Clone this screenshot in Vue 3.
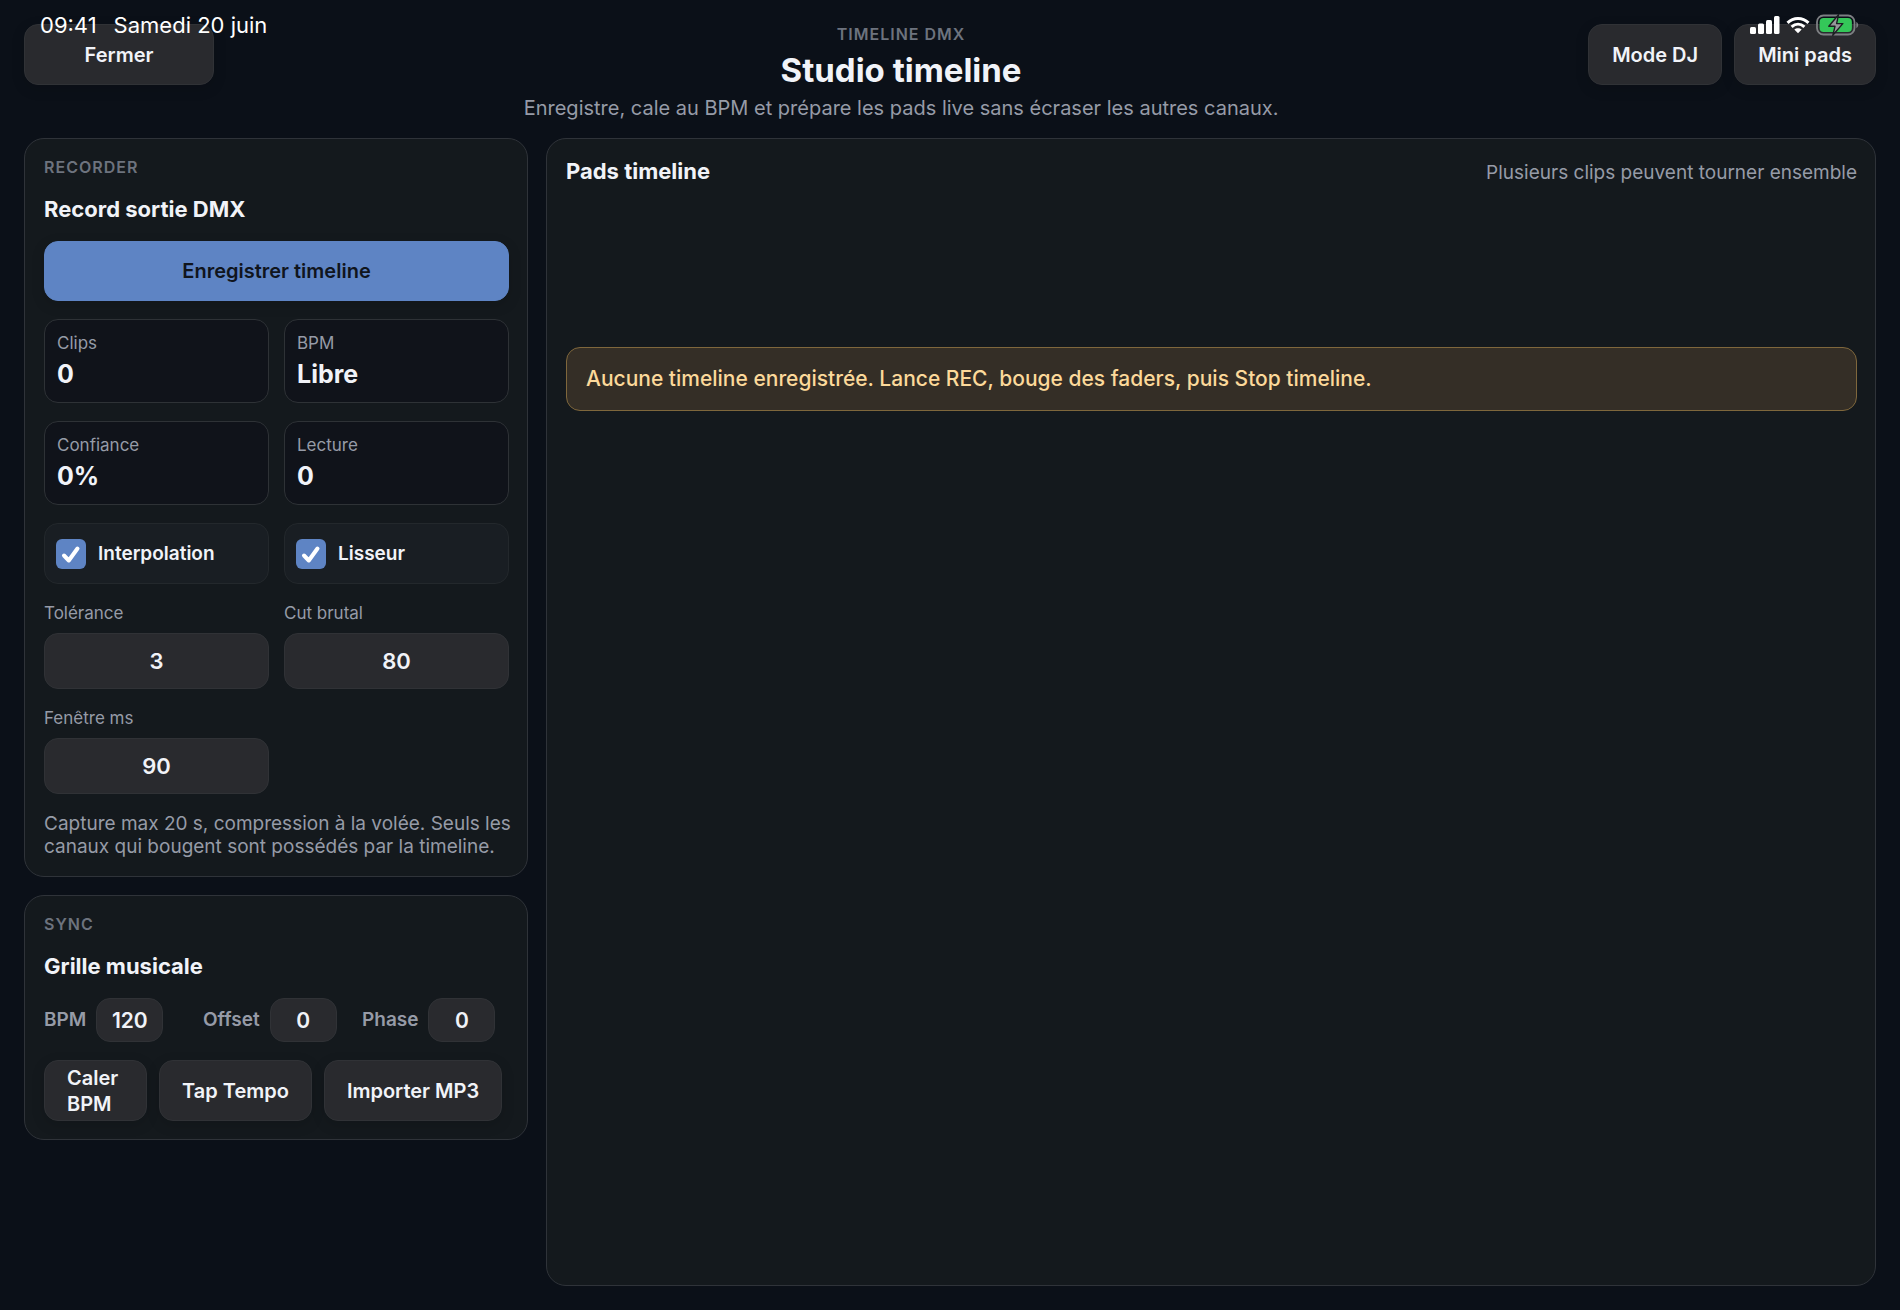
<script setup>
import { reactive } from 'vue'

const stats = [
  { label: 'Clips', value: '0' },
  { label: 'BPM', value: 'Libre' },
  { label: 'Confiance', value: '0%' },
  { label: 'Lecture', value: '0' },
]

const toggles = reactive([
  { id: 'interpolation', label: 'Interpolation', on: true },
  { id: 'lisseur', label: 'Lisseur', on: true },
])

const settings = reactive([
  { id: 'tolerance', label: 'Tolérance', value: '3' },
  { id: 'cut', label: 'Cut brutal', value: '80' },
  { id: 'fenetre', label: 'Fenêtre ms', value: '90' },
])

const sync = reactive([
  { id: 'bpm', label: 'BPM', value: '120' },
  { id: 'offset', label: 'Offset', value: '0' },
  { id: 'phase', label: 'Phase', value: '0' },
])
</script>

<template>
  <div class="page">
    <div class="status">
      <div class="status-side">
        <span>09:41</span>
        <span>Samedi 20 juin</span>
      </div>
      <div class="status-icons">
        <svg width="30" height="18" viewBox="0 0 30 18" fill="#fff" aria-hidden="true">
          <rect x="0" y="11" width="6" height="7" rx="1.5" />
          <rect x="8" y="7.5" width="6" height="10.5" rx="1.5" />
          <rect x="16" y="4" width="6" height="14" rx="1.5" />
          <rect x="24" y="0" width="5.5" height="18" rx="1.5" />
        </svg>
        <svg width="24" height="18" viewBox="0 0 24 18" fill="none" stroke="#fff" stroke-width="3" aria-hidden="true">
          <path d="M1.5 6.8C7.5 1 16.5 1 22.5 6.8" />
          <path d="M5.6 10.9C9.4 7.5 14.6 7.5 18.4 10.9" />
          <path d="M12 17.2L8.3 13.5C10.4 11.7 13.6 11.7 15.7 13.5Z" fill="#fff" stroke="none" />
        </svg>
        <svg width="44" height="22" viewBox="0 0 44 22" aria-hidden="true">
          <rect x="1" y="1.5" width="37.5" height="19" rx="6.5" fill="none" stroke="#7d7f83" stroke-width="1.8" />
          <path d="M40.3 8V14C42.8 13.2 42.8 8.8 40.3 8Z" fill="#7d7f83" />
          <rect x="3.6" y="4" width="32.3" height="14" rx="4" fill="#34c759" />
          <path d="M22.5 0.8L12.8 12.3H19L16.8 21.3L26.8 9.6H20.6Z" fill="#96989b" stroke="#1b2021" stroke-width="1.4" stroke-linejoin="round" />
        </svg>
      </div>
    </div>

    <header class="header">
      <button type="button" class="btn close">Fermer</button>
      <div class="heading">
        <p class="eyebrow">TIMELINE DMX</p>
        <h1>Studio timeline</h1>
        <p class="subtitle">Enregistre, cale au BPM et prépare les pads live sans écraser les autres canaux.</p>
      </div>
      <div class="actions">
        <button type="button" class="btn">Mode DJ</button>
        <button type="button" class="btn">Mini pads</button>
      </div>
    </header>

    <div class="layout">
      <aside class="side">
        <section class="panel">
          <p class="eyebrow">RECORDER</p>
          <h2>Record sortie DMX</h2>
          <button type="button" class="btn primary">Enregistrer timeline</button>
          <div class="grid">
            <div v-for="s in stats" :key="s.label" class="stat">
              <span>{{ s.label }}</span>
              <strong>{{ s.value }}</strong>
            </div>
            <label v-for="t in toggles" :key="t.id" class="toggle" :for="t.id">
              <span class="tick">
                <input :id="t.id" v-model="t.on" type="checkbox" />
                <svg v-if="t.on" width="30" height="30" viewBox="0 0 30 30" aria-hidden="true">
                  <path d="M8 16.5L12.8 21.5L21.5 9.5" fill="none" stroke="#fff" stroke-width="4" stroke-linecap="round" stroke-linejoin="round" />
                </svg>
              </span>
              {{ t.label }}
            </label>
            <div v-for="f in settings" :key="f.id" class="field">
              <label :for="f.id">{{ f.label }}</label>
              <input :id="f.id" v-model="f.value" type="text" inputmode="numeric" />
            </div>
          </div>
          <p class="hint">Capture max 20 s, compression à la volée. Seuls les canaux qui bougent sont possédés par la timeline.</p>
        </section>

        <section class="panel">
          <p class="eyebrow">SYNC</p>
          <h2>Grille musicale</h2>
          <div class="sync-fields">
            <div v-for="f in sync" :key="f.id" class="sync-field">
              <label :for="f.id">{{ f.label }}</label>
              <input :id="f.id" v-model="f.value" type="text" inputmode="numeric" />
            </div>
          </div>
          <div class="sync-actions">
            <button type="button" class="btn wrap">Caler BPM</button>
            <button type="button" class="btn">Tap Tempo</button>
            <button type="button" class="btn">Importer MP3</button>
          </div>
        </section>
      </aside>

      <main class="panel pads">
        <div class="pads-head">
          <h2>Pads timeline</h2>
          <p>Plusieurs clips peuvent tourner ensemble</p>
        </div>
        <p class="alert" role="status">Aucune timeline enregistrée. Lance REC, bouge des faders, puis Stop timeline.</p>
      </main>
    </div>
  </div>
</template>

<style>
body {
  margin: 0;
  background: #0b1018;
}
</style>

<style scoped>
.page {
  position: relative;
  box-sizing: border-box;
  min-height: 100vh;
  padding: 24px;
  display: flex;
  flex-direction: column;
  gap: 16px;
  background: #0b1018;
  color: #f1f3f8;
  font-family: Inter, "Liberation Sans", sans-serif;
  font-size: 20px;
  line-height: 26px;
}

p,
h1,
h2 {
  margin: 0;
}

button,
input {
  box-sizing: border-box;
  font: inherit;
  color: inherit;
}

.status {
  position: absolute;
  top: 12px;
  left: 40px;
  right: 40px;
  display: flex;
  justify-content: space-between;
  align-items: center;
  color: #fff;
  font-size: 22px;
  pointer-events: none;
}

.status-side {
  display: flex;
  gap: 17px;
}

.status-icons {
  display: flex;
  align-items: center;
  gap: 6px;
}

.header {
  display: flex;
  align-items: flex-start;
  justify-content: space-between;
}

.heading {
  display: flex;
  flex-direction: column;
  align-items: center;
  text-align: center;
}

.eyebrow {
  color: #6d737e;
  font-size: 16px;
  line-height: 20px;
  font-weight: 600;
  letter-spacing: 1px;
}

h1 {
  font-size: 33px;
  line-height: 44px;
  font-weight: 700;
  margin: 4px 0 2px;
}

h2 {
  font-size: 22px;
  line-height: 28px;
  font-weight: 700;
}

.subtitle {
  color: #969ba7;
  line-height: 28px;
}

.actions {
  display: flex;
  gap: 12px;
}

.btn {
  height: 61px;
  padding: 0 22px;
  border: 1px solid #303236;
  border-radius: 14px;
  background: #292a2e;
  font-weight: 600;
  white-space: nowrap;
  box-shadow: 0 4px 14px #0002;
}

.actions .btn {
  padding: 0 23px;
}

.close {
  width: 190px;
}

.primary {
  height: 60px;
  border-color: #5e84c4;
  background: #5e84c4;
  color: #10151d;
}

.layout {
  flex: 1;
  display: grid;
  grid-template-columns: 504px minmax(0, 1fr);
  gap: 18px;
}

.side {
  display: flex;
  flex-direction: column;
  gap: 18px;
}

.panel {
  box-sizing: border-box;
  display: flex;
  flex-direction: column;
  gap: 18px;
  padding: 18px 18px 18px 19px;
  border: 1px solid #2f3339;
  border-radius: 20px;
  background: #14191d;
}

.grid {
  display: grid;
  grid-template-columns: 1fr 1fr;
  gap: 18px 15px;
}

.stat {
  display: flex;
  flex-direction: column;
  gap: 4px;
  padding: 12px;
  border: 1px solid #2e3236;
  border-radius: 14px;
  background: #10131a;
}

.stat span {
  color: #969ba7;
  font-size: 17px;
  line-height: 22px;
}

.stat strong {
  font-size: 25px;
  line-height: 32px;
  font-weight: 700;
}

.toggle {
  box-sizing: border-box;
  height: 61px;
  display: flex;
  align-items: center;
  gap: 12px;
  padding: 0 11px;
  border: 1px solid #23282c;
  border-radius: 14px;
  background: #191e23;
  font-size: 19px;
  font-weight: 600;
}

.tick {
  display: grid;
}

.tick > * {
  grid-area: 1 / 1;
}

.tick input {
  appearance: none;
  width: 30px;
  height: 30px;
  margin: 0;
  border-radius: 6px;
  background: #2b3038;
}

.tick input:checked {
  background: #5e84c4;
}

.tick svg {
  pointer-events: none;
}

.field {
  display: flex;
  flex-direction: column;
  gap: 8px;
}

.field label {
  color: #969ba7;
  font-size: 17px;
  line-height: 23px;
}

.field input,
.sync-field input {
  width: 100%;
  height: 56px;
  padding: 0;
  border: 1px solid #303236;
  border-radius: 14px;
  background: #292a2e;
  text-align: center;
  font-size: 22px;
  font-weight: 600;
}

.hint {
  margin-right: -12px;
  color: #969ba7;
  font-size: 19px;
  line-height: 23px;
}

.sync-fields {
  display: grid;
  grid-template-columns: repeat(3, 1fr);
  gap: 12px;
}

.sync-field {
  display: flex;
  align-items: center;
  gap: 10px;
}

.sync-field label {
  color: #969ba7;
  font-size: 19px;
  font-weight: 600;
}

.sync-field input {
  width: 67px;
  height: 44px;
  font-size: 21px;
}

.sync-actions {
  display: flex;
  gap: 12px;
}

.sync-actions .btn {
  flex: none;
}

.sync-actions .wrap {
  flex: 0 1 103px;
  white-space: normal;
  text-align: left;
}

.pads-head {
  display: flex;
  align-items: flex-end;
  justify-content: space-between;
  margin-bottom: 144px;
}

.pads-head p {
  color: #969ba7;
  font-size: 19px;
  line-height: 24px;
}

.alert {
  padding: 18px 19px;
  border: 1px solid #7f673c;
  border-radius: 14px;
  background: #342e26;
  color: #fcd99a;
  font-size: 21px;
  font-weight: 500;
}
</style>
